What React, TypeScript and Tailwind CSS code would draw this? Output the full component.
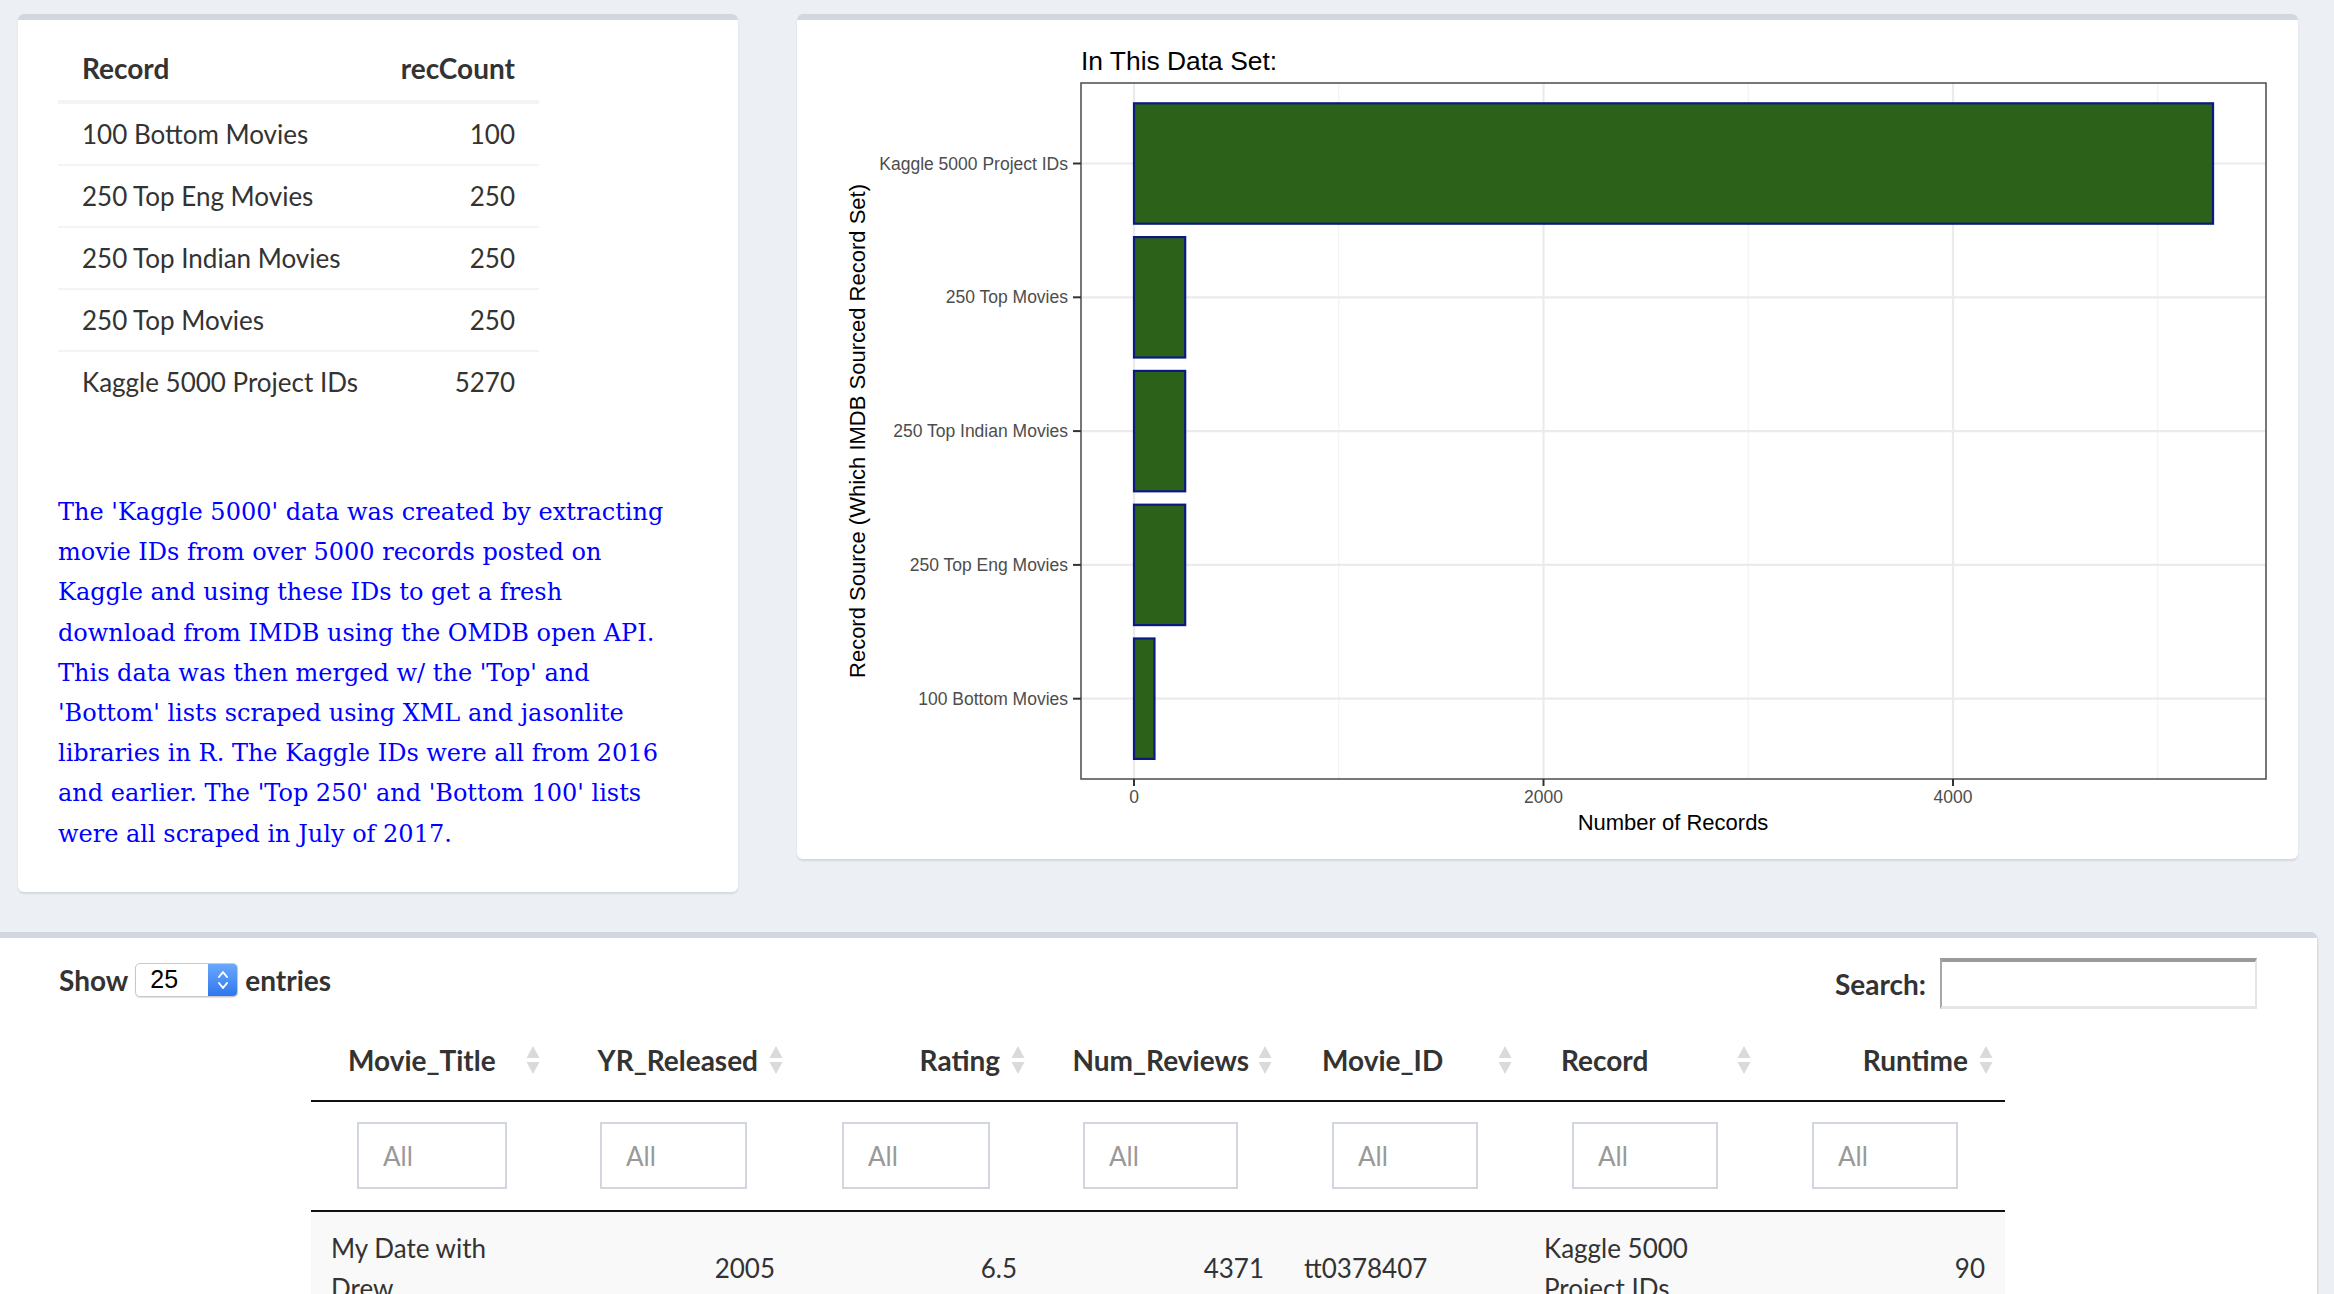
import React from "react";

const SANS = "font-['Lato','Noto_Sans',sans-serif]";

const recTable = [
  ["100 Bottom Movies", "100"],
  ["250 Top Eng Movies", "250"],
  ["250 Top Indian Movies", "250"],
  ["250 Top Movies", "250"],
  ["Kaggle 5000 Project IDs", "5270"],
];

const paraLines = [
  "The 'Kaggle 5000' data was created by extracting",
  "movie IDs from over 5000 records posted on",
  "Kaggle and using these IDs to get a fresh",
  "download from IMDB using the OMDB open API.",
  "This data was then merged w/ the 'Top' and",
  "'Bottom' lists scraped using XML and jasonlite",
  "libraries in R. The Kaggle IDs were all from 2016",
  "and earlier. The 'Top 250' and 'Bottom 100' lists",
  "were all scraped in July of 2017.",
];

function Chart() {
  const x0 = 337;
  const k = 0.20475;
  const xs = (v: number) => x0 + v * k;
  const cats = [
    { label: "Kaggle 5000 Project IDs", v: 5270, y: 143.5 },
    { label: "250 Top Movies", v: 250, y: 277.3 },
    { label: "250 Top Indian Movies", v: 250, y: 411.1 },
    { label: "250 Top Eng Movies", v: 250, y: 544.9 },
    { label: "100 Bottom Movies", v: 100, y: 678.7 },
  ];
  const ff = "'Liberation Sans', Arial, sans-serif";
  return (
    <svg width="1501" height="839" viewBox="0 0 1501 839" className="block">
      <text x="284" y="50" fontFamily={ff} fontSize="26.4" fill="#000">
        In This Data Set:
      </text>
      <rect x="284" y="63" width="1185" height="696" fill="#fff" />
      {[1000, 3000, 5000].map((v) => (
        <line key={v} x1={xs(v)} x2={xs(v)} y1="63" y2="759" stroke="#f2f2f2" strokeWidth="1.2" />
      ))}
      {[0, 2000, 4000].map((v) => (
        <line key={v} x1={xs(v)} x2={xs(v)} y1="63" y2="759" stroke="#ebebeb" strokeWidth="2.2" />
      ))}
      {cats.map((c) => (
        <line key={c.label} x1="284" x2="1469" y1={c.y} y2={c.y} stroke="#ebebeb" strokeWidth="2.2" />
      ))}
      {cats.map((c) => (
        <rect
          key={"b" + c.label}
          x={x0}
          y={c.y - 60.2}
          width={c.v * k}
          height="120.4"
          fill="#2c6119"
          stroke="#0b1a80"
          strokeWidth="2.2"
        />
      ))}
      <rect x="284" y="63" width="1185" height="696" fill="none" stroke="#555" strokeWidth="1.6" />
      {cats.map((c) => (
        <g key={"l" + c.label}>
          <line x1="276" x2="284" y1={c.y} y2={c.y} stroke="#333" strokeWidth="2" />
          <text x="271" y={c.y + 6} textAnchor="end" fontFamily={ff} fontSize="17.5" fill="#4d4d4d">
            {c.label}
          </text>
        </g>
      ))}
      {[0, 2000, 4000].map((v) => (
        <g key={"t" + v}>
          <line x1={xs(v)} x2={xs(v)} y1="759" y2="766" stroke="#333" strokeWidth="2" />
          <text x={xs(v)} y="783" textAnchor="middle" fontFamily={ff} fontSize="17.5" fill="#4d4d4d">
            {v}
          </text>
        </g>
      ))}
      <text x="876" y="810" textAnchor="middle" fontFamily={ff} fontSize="22" fill="#000">
        Number of Records
      </text>
      <text
        x="60"
        y="419"
        textAnchor="middle"
        fontFamily={ff}
        fontSize="22"
        fill="#000"
        transform="rotate(-90 60 411)"
      >
        Record Source (Which IMDB Sourced Record Set)
      </text>
    </svg>
  );
}

function SortIcon() {
  return (
    <svg
      width="16"
      height="30"
      viewBox="0 0 16 30"
      className="absolute right-[11px] top-1/2 -translate-y-1/2"
    >
      <path d="M8 1 L14.5 13 L1.5 13 Z" fill="#dadada" />
      <path d="M1.5 17 L14.5 17 L8 29 Z" fill="#dadada" />
    </svg>
  );
}

const cols = [
  { h: "Movie_Title", right: false, pad: "pl-[37px] pr-[36px]", fOff: "ml-[46px]", fW: "w-[150px]" },
  { h: "YR_Released", right: true, pad: "pl-[20px] pr-[37px]", fOff: "ml-[48px]", fW: "w-[147px]" },
  { h: "Rating", right: true, pad: "pl-[20px] pr-[37px]", fOff: "ml-[47px]", fW: "w-[148px]" },
  { h: "Num_Reviews", right: true, pad: "pl-[20px] pr-[35px]", fOff: "ml-[46px]", fW: "w-[155px]" },
  { h: "Movie_ID", right: false, pad: "pl-[38px] pr-[36px]", fOff: "ml-[48px]", fW: "w-[146px]" },
  { h: "Record", right: false, pad: "pl-[37px] pr-[36px]", fOff: "ml-[48px]", fW: "w-[146px]" },
  { h: "Runtime", right: true, pad: "pl-[20px] pr-[37px]", fOff: "ml-[49px]", fW: "w-[146px]" },
];

export default function App() {
  return (
    <div className={`w-[2334px] h-[1294px] overflow-hidden bg-[#ecf0f5] text-[#333] ${SANS}`}>
      {/* top row */}
      <div className="flex items-start pt-[14px]">
        {/* left box */}
        <div className="ml-[18px] w-[720px] h-[878px] bg-white border-t-[6px] border-[#d2d6de] rounded-[6px] shadow-[0_2px_2px_rgba(0,0,0,0.1)]">
          <div className="pt-[20px] px-[40px]">
            <div className="w-[481px] text-[26px]">
              <div className="flex items-center justify-between h-[64px] pb-[4px] px-[24px] border-b-4 border-[#f4f4f4] font-bold text-[28px]">
                <span>Record</span>
                <span>recCount</span>
              </div>
              {recTable.map((r, i) => (
                <div
                  key={r[0]}
                  className={
                    i < recTable.length - 1
                      ? "flex items-center justify-between h-[62px] px-[24px] border-b-2 border-[#f4f4f4]"
                      : "flex items-center justify-between h-[60px] px-[24px]"
                  }
                >
                  <span>{r[0]}</span>
                  <span>{r[1]}</span>
                </div>
              ))}
            </div>
            <div className="mt-[80px] font-['DejaVu_Serif',serif] text-[24px] leading-[40.2px] text-[#0000ff] whitespace-nowrap">
              {paraLines.map((l) => (
                <div key={l}>{l}</div>
              ))}
            </div>
          </div>
        </div>
        {/* right box */}
        <div className="ml-[59px] w-[1501px] h-[845px] bg-white border-t-[6px] border-[#d2d6de] rounded-[6px] shadow-[0_2px_2px_rgba(0,0,0,0.1)]">
          <Chart />
        </div>
      </div>

      {/* bottom box */}
      <div className="mt-[40px] w-[2317px] h-[400px] bg-white border-t-[6px] border-[#d2d6de] rounded-tr-[6px] shadow-[1px_2px_2px_rgba(0,0,0,0.12)]">
        <div className="flex items-start justify-between h-[82px]">
          <div className="flex items-center h-[34px] mt-[25px] ml-[59px] text-[28px]">
            <span className="font-bold">Show</span>
            <div className="ml-[7px] flex h-[34px] w-[103px] rounded-[5px] border border-[#c8c8c8] shadow-[0_1px_1px_rgba(0,0,0,0.12)] bg-white overflow-hidden">
              <div className="flex-1 flex items-center pl-[14px] font-['Liberation_Sans',Arial,sans-serif] text-[25px] text-black">
                25
              </div>
              <div className="w-[29px] h-full bg-gradient-to-b from-[#6aa8fb] to-[#2f76ee] flex items-center justify-center">
                <svg width="14" height="24" viewBox="0 0 14 24">
                  <path d="M3 9 L7 4 L11 9" fill="none" stroke="#fff" strokeWidth="2" strokeLinecap="round" strokeLinejoin="round" />
                  <path d="M3 15 L7 20 L11 15" fill="none" stroke="#fff" strokeWidth="2" strokeLinecap="round" strokeLinejoin="round" />
                </svg>
              </div>
            </div>
            <span className="ml-[7px] font-bold">entries</span>
          </div>
          <div className="flex items-center mt-[20px] mr-[60px] text-[28px]">
            <span className="font-bold mr-[14px]">Search:</span>
            <div className="w-[317px] h-[51px] border-t-[4px] border-l-2 border-r-2 border-b-[3px] border-t-[#9a9a9a] border-l-[#a8a8a8] border-r-[#e6e6e6] border-b-[#e6e6e6] bg-white" />
          </div>
        </div>

        <div className="ml-[311px] w-[1694px] text-[26px]">
          {/* header */}
          <div className="grid grid-cols-[241px_243px_242px_247px_240px_239px_242px] border-b-2 border-[#111] text-[28px]">
            {cols.map((c) => (
              <div
                key={c.h}
                className={`relative h-[80px] flex items-center font-bold whitespace-nowrap ${c.pad} ${
                  c.right ? "justify-end" : "justify-start"
                }`}
              >
                {c.h}
                <SortIcon />
              </div>
            ))}
          </div>
          {/* filter row */}
          <div className="grid grid-cols-[241px_243px_242px_247px_240px_239px_242px] h-[110px] border-b-2 border-[#111]">
            {cols.map((c) => (
              <div key={"f" + c.h} className="pt-[20px]">
                <input
                  placeholder="All"
                  className={`${c.fOff} ${c.fW} h-[67px] border-2 border-[#d2d6de] pl-[24px] text-[26px] text-[#555] placeholder:text-[#999] bg-white outline-none`}
                />
              </div>
            ))}
          </div>
          {/* data row */}
          <div className="grid grid-cols-[241px_243px_242px_247px_240px_239px_242px] bg-[#f9f9f9] leading-[40px]">
            <div className="px-[20px] py-[16px] self-center">
              My Date with
              <br />
              Drew
            </div>
            <div className="px-[20px] py-[16px] self-center text-right">2005</div>
            <div className="px-[20px] py-[16px] self-center text-right">6.5</div>
            <div className="px-[20px] py-[16px] self-center text-right">4371</div>
            <div className="px-[20px] py-[16px] self-center">tt0378407</div>
            <div className="px-[20px] py-[16px] self-center whitespace-nowrap">
              Kaggle 5000
              <br />
              Project IDs
            </div>
            <div className="px-[20px] py-[16px] self-center text-right">90</div>
          </div>
        </div>
      </div>
    </div>
  );
}
